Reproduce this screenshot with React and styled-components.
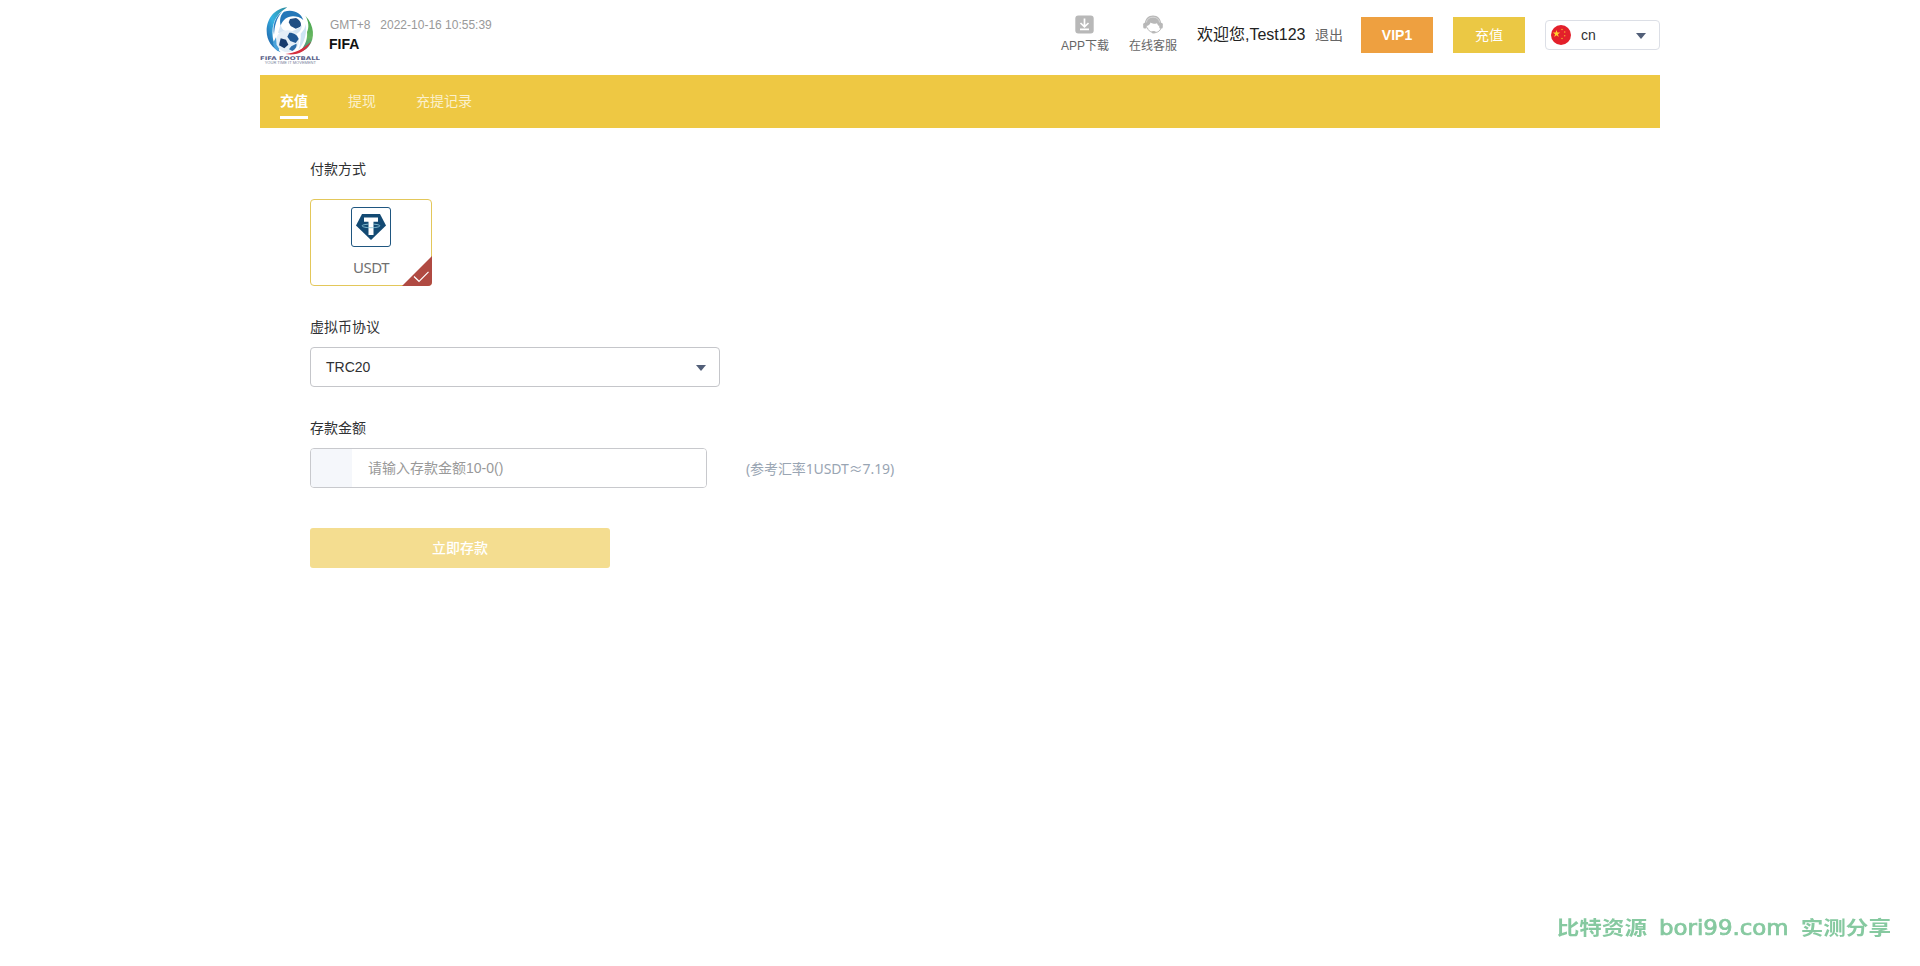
import React, { useState } from "react";
import styled, { createGlobalStyle } from "styled-components";

const GlobalStyle = createGlobalStyle`
  * {
    box-sizing: border-box;
  }
  body {
    margin: 0;
    background: #fff;
    color: #303133;
    font-family: "Liberation Sans", "Noto Sans CJK SC", sans-serif;
    font-size: 14px;
  }
  button, input {
    font-family: inherit;
  }
`;

const Page = styled.div`
  width: 1400px;
  min-height: 966px;
  margin: 0 auto;
`;

const Header = styled.header`
  display: flex;
  justify-content: space-between;
  height: 75px;
`;

const Brand = styled.div`
  display: flex;
  gap: 10px;
  padding-top: 7px;
`;

const BrandText = styled.div`
  padding-top: 10px;
`;

const Clock = styled.div`
  display: flex;
  gap: 10px;
  font-size: 12px;
  line-height: 16px;
  color: #999;
`;

const SiteName = styled.div`
  margin: 1px 0 0 -1px;
  font-size: 14px;
  line-height: 20px;
  font-weight: bold;
  color: #111;
`;

const Tools = styled.div`
  display: flex;
  align-items: center;
  height: 69px;
`;

const ToolLink = styled.a`
  display: flex;
  flex-direction: column;
  align-items: center;
  width: 48px;
  margin-right: 20px;
  font-size: 12px;
  line-height: 16px;
  white-space: nowrap;
  color: #666;
  svg {
    margin: 0 1px 4px 0;
  }
`;

const Welcome = styled.span`
  width: 118px;
  font-size: 16px;
  line-height: 20px;
  white-space: nowrap;
  color: #222;
`;

const Logout = styled.a`
  width: 46px;
  line-height: 20px;
  padding-top: 1px;
  color: #666;
`;

const HeaderButton = styled.button`
  width: 72px;
  height: 36px;
  margin: 17px 20px 0 0;
  align-self: flex-start;
  padding: 0 0 ${props => (props.$bold ? 0 : 2)}px;
  border: 0;
  font-size: 14px;
  font-weight: ${props => (props.$bold ? "bold" : "normal")};
  color: #fff;
  background: ${props => props.$background};
`;

const Language = styled.div`
  display: flex;
  align-items: center;
  align-self: flex-start;
  width: 115px;
  height: 30px;
  margin-top: 20px;
  padding: 0 13px 0 5px;
  border: 1px solid #dcdfe6;
  border-radius: 4px;
  span {
    flex: 1;
    padding-left: 10px;
  }
`;

const Caret = styled.i`
  margin-top: 2px;
  border: 5px solid transparent;
  border-top: 6px solid #525f78;
  border-bottom: 0;
`;

const Nav = styled.nav`
  display: flex;
  gap: 40px;
  height: 53px;
  padding: 16px 20px 0;
  background: #eec843;
`;

const NavItem = styled.a`
  height: 28px;
  line-height: 21px;
  font-weight: ${props => (props.$active ? "bold" : "normal")};
  color: ${props => (props.$active ? "#fff" : "#fbf0cb")};
  border-bottom: 3px solid ${props => (props.$active ? "#fff" : "transparent")};
  cursor: pointer;
`;

const Form = styled.main`
  padding: 31px 50px 0;
`;

const Label = styled.div`
  height: 20px;
  line-height: 20px;
  margin-bottom: ${props => props.$space || 10}px;
  color: #303133;
`;

const PayCard = styled.div`
  position: relative;
  display: flex;
  flex-direction: column;
  align-items: center;
  width: 122px;
  height: 87px;
  margin-bottom: 31px;
  padding-top: 7px;
  border: 1px solid #e3c75a;
  border-radius: 4px;
  font-family: "Noto Sans", sans-serif;
  font-size: 15px;
  letter-spacing: -0.5px;
  line-height: 20px;
  color: #707070;
  span {
    margin-top: 10px;
  }
`;

const CoinBox = styled.div`
  display: flex;
  align-items: center;
  justify-content: center;
  width: 40px;
  height: 40px;
  border: 1px solid #1f5680;
  border-radius: 3px;
`;

const Corner = styled.svg`
  position: absolute;
  right: -1px;
  bottom: -1px;
`;

const Select = styled.div`
  display: flex;
  align-items: center;
  justify-content: space-between;
  width: 410px;
  height: 40px;
  margin-bottom: 31px;
  padding: 0 13px 0 15px;
  border: 1px solid #c5c6ca;
  border-radius: 4px;
`;

const AmountRow = styled.div`
  display: flex;
  align-items: center;
  gap: 39px;
  margin-bottom: 40px;
`;

const AmountBox = styled.div`
  display: flex;
  width: 397px;
  height: 40px;
  border: 1px solid #c8c9cd;
  border-radius: 4px;
  overflow: hidden;
`;

const Addon = styled.div`
  width: 41px;
  background: #f5f7fb;
`;

const AmountInput = styled.input`
  flex: 1;
  padding: 0 16px;
  border: 0;
  outline: 0;
  font-size: 14px;
  &::placeholder {
    color: #999;
  }
`;

const Rate = styled.span`
  padding-top: 1px;
  font-family: "Noto Sans", "Noto Sans CJK SC", sans-serif;
  font-size: 14px;
  letter-spacing: -0.1px;
  line-height: 20px;
  color: #99a5b3;
`;

const Submit = styled.button`
  display: block;
  width: 300px;
  height: 40px;
  padding: 0 0 2px;
  border: 0;
  border-radius: 3px;
  font-size: 14px;
  font-weight: 500;
  color: #fff;
  background: #f4dd90;
`;

const Watermark = styled.div`
  position: fixed;
  right: 29px;
  bottom: 25px;
  display: flex;
  align-items: center;
  gap: 12px;
  height: 28px;
  color: #86c9a0;
  font-family: "DejaVu Sans", sans-serif;
  font-size: 22.9px;
  white-space: nowrap;
  pointer-events: none;
`;

const WatermarkSite = styled.span`
  padding-top: 2px;
  -webkit-text-stroke: 0.8px #86c9a0;
  transform: scaleY(0.93);
`;

const WatermarkCn = styled.span`
  font-family: "Noto Sans CJK SC", sans-serif;
  font-size: 22.6px;
  line-height: 28px;
  font-weight: bold;
  transform: scaleY(0.87);
`;

const Logo = () => (
  <svg width="60" height="58" viewBox="0 20 180 174">
    <defs>
      <linearGradient id="wing" x1="1" y1="0" x2="0" y2="1">
        <stop offset="0" stopColor="#2a8a9a" />
        <stop offset="0.5" stopColor="#36b2e2" />
        <stop offset="1" stopColor="#174d9b" />
      </linearGradient>
      <linearGradient id="leaf" x1="0" y1="0" x2="0" y2="1">
        <stop offset="0" stopColor="#3f9f4a" />
        <stop offset="0.6" stopColor="#69b862" />
        <stop offset="1" stopColor="#3c7f8c" />
      </linearGradient>
    </defs>
    <path d="M82 21C44 24 20 55 20 92c0 28 16 52 42 64-13-14-23-29-24-48C35 75 44 43 82 21Z" fill="url(#wing)" />
    <path d="M66 34C44 51 37 76 42 103c2-27 7-49 24-69Z" fill="#2a7fc4" />
    <path d="M72 34c28-8 50 3 58 25-9-8-20-11-31-11-18 0-31 11-37 28-4-18-1-32 10-42Z" fill="#2477b8" />
    <path d="M90 56l18-3c12 6 17 15 14 26l-15 6-15-8-6-11Z" fill="#214f83" />
    <path d="M62 72c1 10 6 17 14 20 18 4 36-2 50-18-1 15-9 25-22 29-16 1-36-3-50-6Z" fill="#d6e6f4" />
    <path d="M49 114c4-16 17-24 34-24 19 0 33 13 34 32 0 18-14 33-36 34-21-2-35-19-32-42Z" fill="#e4eef7" />
    <path d="M62 114l16 4 7 15-12 11-16-9Z" fill="#173b6d" />
    <path d="M88 97c15 0 24 7 28 19l-9 12-16-6-9-13Z" fill="#205894" />
    <path d="M94 138l15-8c3 6-3 17-12 22l-10-5Z" fill="#2d6eaa" />
    <path d="M48 111l-9 17c2 12 7 19 15 25l4-7-8-13Z" fill="#4aa2da" />
    <path d="M136 46c28 30 29 67 11 91-9 11-19 16-28 18 19-22 24-42 22-60 7-15 5-32-5-49Z" fill="url(#leaf)" />
    <path d="M137 70c5 25-3 56-22 80 6-20 8-36 7-50 9-10 14-19 15-30Z" fill="#cfe5f5" />
    <path d="M153 124c-14 30-43 43-77 37 29-3 52-14 77-37Z" fill="#d52e3e" />
    <text x="0" y="178" textLength="180" lengthAdjust="spacingAndGlyphs" fontFamily="DejaVu Sans" fontSize="15" fontWeight="bold" fill="#5a6088">FIFA FOOTBALL</text>
    <text x="14" y="190" textLength="154" lengthAdjust="spacingAndGlyphs" fontFamily="Liberation Sans" fontSize="9" fill="#777f9b">YOUR TIME IT MOVEMENT</text>
  </svg>
);

const DownloadIcon = () => (
  <svg width="19" height="19" viewBox="0 0 19 19">
    <rect x="0.3" y="0.5" width="18.4" height="18" rx="3" fill="#b8b8b8" />
    <path d="M9.5 3.5v7.5M5.5 8l4 3.8L13.5 8M5 14.4h9" fill="none" stroke="#fff" strokeWidth="1.7" />
  </svg>
);

const ServiceIcon = () => (
  <svg width="20" height="19" viewBox="0 0 20 19">
    <path d="M1.8 9C2 4 5.3.6 10 .6s8 3.4 8.2 8.4l-2.4 2c-.8-.8-1.5-1.6-1.8-2.8-3 1-5.2.6-6.4-.6-.6 2-1.8 3-3.8 3.4Z" fill="#b8b8b8" />
    <path d="M3.3 7.5C4 4 6.5 2.2 10 2.2s6 1.8 6.7 5.3" fill="none" stroke="#e4e4e4" strokeWidth="0.7" />
    <rect x="0.2" y="7.8" width="3.6" height="5.6" rx="1.5" fill="#b8b8b8" />
    <rect x="16.2" y="7.8" width="3.6" height="5.6" rx="1.5" fill="#b8b8b8" />
    <path d="M4.2 12.5c1 2.8 2.8 4.6 5.4 4.6M18 13c-.8 2.8-2.8 4.2-5.8 4.6" fill="none" stroke="#b8b8b8" strokeWidth="1" />
    <ellipse cx="10.7" cy="17.3" rx="2.2" ry="1.3" fill="#b8b8b8" />
  </svg>
);

const Flag = () => (
  <svg width="20" height="20" viewBox="0 0 20 20">
    <circle cx="10" cy="10" r="10" fill="#e3202b" />
    <path d="M5.5 4.9l.9 2.7h2.8L6.900 9.300l.9 2.700-2.300-1.700-2.300 1.700.9-2.700-2.300-1.700h2.800Z" fill="#ffd22e" />
    <g fill="#f3a42c">
      <circle cx="11" cy="4.5" r="0.8" />
      <circle cx="13.7" cy="7" r="0.8" />
      <circle cx="13.7" cy="10.7" r="0.8" />
      <circle cx="11" cy="13.5" r="0.8" />
    </g>
  </svg>
);

const TetherIcon = () => (
  <svg width="30" height="26" viewBox="0 0 30 26">
    <path d="M6 0h18l6 11.5L15 26 0 11.5Z" fill="#134a73" />
    <path d="M8 3.5h14v4.2h-4.5V21h-5V7.7H8Z" fill="#fff" />
    <path d="M12.5 10.2c-3.7.2-6.3.8-6.3 1.600 0 1.100 3.900 1.900 8.800 1.900s8.800-.8 8.800-1.900c0-.8-2.600-1.400-6.300-1.600" fill="none" stroke="#8fc6d8" strokeWidth="0.9" />
  </svg>
);

const tabs = ["充值", "提现", "充提记录"];

const App = () => {
  const [active, setActive] = useState(0);
  const [amount, setAmount] = useState("");
  return (
    <>
      <GlobalStyle />
      <Page>
        <Header>
          <Brand>
            <Logo />
            <BrandText>
              <Clock>
                <span>GMT+8</span>
                <span>2022-10-16 10:55:39</span>
              </Clock>
              <SiteName>FIFA</SiteName>
            </BrandText>
          </Brand>
          <Tools>
            <ToolLink>
              <DownloadIcon />
              APP下载
            </ToolLink>
            <ToolLink>
              <ServiceIcon />
              在线客服
            </ToolLink>
            <Welcome>欢迎您,Test123</Welcome>
            <Logout>退出</Logout>
            <HeaderButton $background="#eea040" $bold>VIP1</HeaderButton>
            <HeaderButton $background="#ebc844">充值</HeaderButton>
            <Language>
              <Flag />
              <span>cn</span>
              <Caret />
            </Language>
          </Tools>
        </Header>
        <Nav>
          {tabs.map((tab, i) => (
            <NavItem key={tab} $active={i === active} onClick={() => setActive(i)}>
              {tab}
            </NavItem>
          ))}
        </Nav>
        <Form>
          <Label $space={20}>付款方式</Label>
          <PayCard>
            <CoinBox>
              <TetherIcon />
            </CoinBox>
            <span>USDT</span>
            <Corner width="30" height="30" viewBox="0 0 30 30">
              <path d="M30 0v26a4 4 0 0 1-4 4H0Z" fill="#b04a42" />
              <path d="M12 20.5l5 4.8 9.5-9.5" fill="none" stroke="#fff" strokeWidth="1.2" />
            </Corner>
          </PayCard>
          <Label>虚拟币协议</Label>
          <Select>
            TRC20
            <Caret />
          </Select>
          <Label>存款金额</Label>
          <AmountRow>
            <AmountBox>
              <Addon />
              <AmountInput
                value={amount}
                placeholder="请输入存款金额10-0()"
                onChange={e => setAmount(e.target.value)}
              />
            </AmountBox>
            <Rate>(参考汇率1USDT≈7.19)</Rate>
          </AmountRow>
          <Submit>立即存款</Submit>
        </Form>
      </Page>
      <Watermark>
        <WatermarkCn>比特资源</WatermarkCn>
        <WatermarkSite>bori99.com</WatermarkSite>
        <WatermarkCn>实测分享</WatermarkCn>
      </Watermark>
    </>
  );
};

export default App;
